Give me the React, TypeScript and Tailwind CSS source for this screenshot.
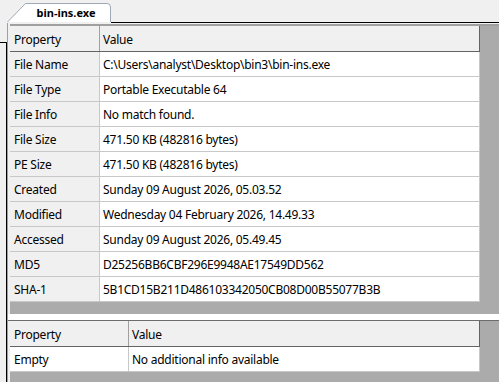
import React from "react";

const rows: [string, string][] = [
  ["File Name", "C:\\Users\\analyst\\Desktop\\bin3\\bin-ins.exe"],
  ["File Type", "Portable Executable 64"],
  ["File Info", "No match found."],
  ["File Size", "471.50 KB (482816 bytes)"],
  ["PE Size", "471.50 KB (482816 bytes)"],
  ["Created", "Sunday 09 August 2026, 05.03.52"],
  ["Modified", "Wednesday 04 February 2026, 14.49.33"],
  ["Accessed", "Sunday 09 August 2026, 05.49.45"],
  ["MD5", "D25256BB6CBF296E9948AE17549DD562"],
  ["SHA-1", "5B1CD15B211D486103342050CB08D00B55077B3B"],
];

function Header({ w1 }: { w1: string }) {
  return (
    <div className="flex h-[26px] w-[470px] bg-[#f0f0f0] border-b border-r border-[#646464]">
      <div className={`${w1} flex items-center pl-[4px] pt-[2px] border-r border-[#a0a0a0]`}>Property</div>
      <div className="flex-1 flex items-center pl-[3px] pt-[2px]">Value</div>
    </div>
  );
}

export default function App() {
  return (
    <div
      className="w-[499px] h-[382px] bg-[#f0f0f0] overflow-hidden flex flex-col text-[12px] tracking-[-0.25px] text-black"
      style={{ fontFamily: '"Noto Sans", "Open Sans", sans-serif' }}
    >
      {/* Tab strip */}
      <div className="flex h-[23px] shrink-0">
        <div className="w-[7px]" />
        <div className="relative w-[104px] h-[23px]">
          <svg width="104" height="23" className="absolute left-0 top-0">
            <path d="M0.5 22 L18.5 3.5 L100 3.5 Q103.5 3.5 103.5 7 L103.5 22" fill="#ffffff" stroke="#9fa9b5" strokeWidth="1" />
          </svg>
          <div className="absolute left-[14px] right-0 top-[4px] h-[18px] flex items-center justify-center font-bold text-[11px] tracking-normal">
            bin-ins.exe
          </div>
        </div>
        <div className="flex-1 border-b border-black" />
      </div>

      {/* Body */}
      <div className="flex flex-1">
        <div className="w-[7px] shrink-0">
          <div className="mt-[19px] h-[400px] border-t border-r border-black" />
        </div>
        <div className="flex-1 flex flex-col border-l border-[#a0a0a0] pl-[2px] pt-[1px]">
          {/* Top list */}
          <div className="h-[290px] bg-[#ababab] border-t-[2px] border-[#a0a0a0]">
            <Header w1="w-[90px]" />
            {rows.map(([k, v]) => (
              <div key={k} className="flex h-[25px] w-[470px] bg-white border-b border-r border-[#c8c8c8]">
                <div className="w-[90px] flex items-center pl-[4px] pt-[2px] border-r border-[#c8c8c8] bg-[#f0f0f0]">{k}</div>
                <div className="flex-1 flex items-center pl-[3px] pt-[2px]">{v}</div>
              </div>
            ))}
          </div>
          {/* Splitter */}
          <div className="h-[7px] bg-white border-b border-[#6d6d6d] -ml-[2px]" />
          {/* Bottom list */}
          <div className="flex-1 bg-[#ababab]">
            <Header w1="w-[119px]" />
            <div className="flex h-[25px] w-[470px] bg-white border-b border-r border-[#c8c8c8]">
              <div className="w-[119px] flex items-center pl-[4px] pt-[2px] border-r border-[#c8c8c8]">Empty</div>
              <div className="flex-1 flex items-center pl-[3px] pt-[2px]">No additional info available</div>
            </div>
          </div>
        </div>
      </div>
    </div>
  );
}
